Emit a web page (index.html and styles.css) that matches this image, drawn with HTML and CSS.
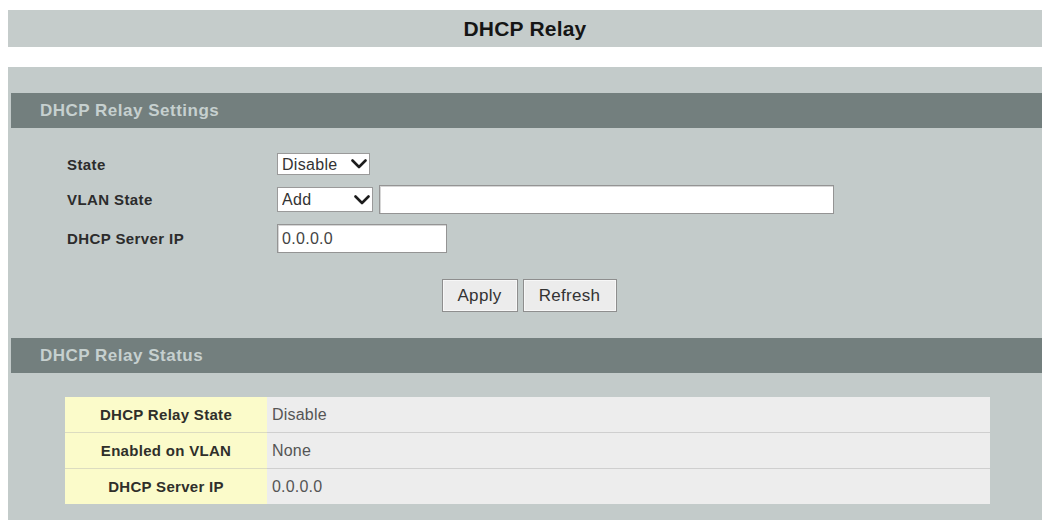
FILE: index.html
```html
<!DOCTYPE html>
<html lang="en">
<head>
<meta charset="utf-8">
<title>DHCP Relay</title>
<link rel="stylesheet" href="styles.css">
</head>
<body>
<div class="page">
  <div class="page-title">DHCP Relay</div>

  <div class="panel">
    <div class="section-head">DHCP Relay Settings</div>

    <form class="settings" onsubmit="return false">
      <div class="form-grid">
        <label class="field-label" for="relay-state">State</label>
        <div class="field">
          <span class="select select-state">
            <select id="relay-state">
              <option>Disable</option>
              <option>Enable</option>
            </select>
            <svg class="chev" viewBox="0 0 16 10" aria-hidden="true"><polyline points="1.5,1.5 8,8 14.5,1.5"/></svg>
          </span>
        </div>

        <label class="field-label" for="vlan-state">VLAN State</label>
        <div class="field">
          <span class="select select-vlan">
            <select id="vlan-state">
              <option>Add</option>
              <option>Delete</option>
            </select>
            <svg class="chev" viewBox="0 0 16 10" aria-hidden="true"><polyline points="1.5,1.5 8,8 14.5,1.5"/></svg>
          </span>
          <input class="text-input vlan-list" type="text" value="">
        </div>

        <label class="field-label" for="server-ip">DHCP Server IP</label>
        <div class="field">
          <input id="server-ip" class="text-input ip-input" type="text" value="0.0.0.0">
        </div>
      </div>

      <div class="actions">
        <button type="button" class="btn btn-apply">Apply</button>
        <button type="button" class="btn btn-refresh">Refresh</button>
      </div>
    </form>

    <div class="section-head">DHCP Relay Status</div>

    <table class="status">
      <tr>
        <th>DHCP Relay State</th>
        <td>Disable</td>
      </tr>
      <tr>
        <th>Enabled on VLAN</th>
        <td>None</td>
      </tr>
      <tr>
        <th>DHCP Server IP</th>
        <td>0.0.0.0</td>
      </tr>
    </table>
  </div>
</div>
</body>
</html>
```

FILE: styles.css
```css
html, body {
  margin: 0;
  padding: 0;
  background: #ffffff;
  font-family: "Liberation Sans", Arial, sans-serif;
  color: #2e2e2e;
}

.page {
  padding: 10px 4px 0 8px;
}

/* page title strip */
.page-title {
  height: 37px;
  line-height: 37px;
  background: #c5cccb;
  text-align: center;
  font-size: 21px;
  font-weight: bold;
  color: #151515;
  letter-spacing: 0.2px;
}

/* main grey panel */
.panel {
  margin-top: 20px;
  background: #c3cbca;
  padding-top: 26px;
  padding-bottom: 40px;
}

.section-head {
  height: 35px;
  line-height: 35px;
  margin-left: 3px;
  padding-left: 29px;
  background: #737f7e;
  color: #c6d0cf;
  font-size: 17px;
  font-weight: bold;
  letter-spacing: 0.5px;
}

/* settings form */
.settings {
  margin: 0;
  padding: 25px 0 26px 0;
}

.form-grid {
  display: grid;
  grid-template-columns: 210px auto;
  row-gap: 10px;
  align-items: center;
  padding-left: 59px;
}

.field-label {
  font-size: 15px;
  font-weight: bold;
  color: #2c2c2c;
  letter-spacing: 0.4px;
}

.field {
  display: flex;
  align-items: center;
  gap: 6px;
}

.select {
  position: relative;
  display: inline-block;
}

.select select {
  appearance: none;
  -webkit-appearance: none;
  display: block;
  margin: 0;
  padding: 0 0 0 4px;
  border: 1px solid #9a9a9a;
  border-radius: 0;
  background: #ffffff;
  font-family: "Liberation Sans", Arial, sans-serif;
  font-size: 16px;
  color: #333333;
  letter-spacing: 0.3px;
  outline: none;
}

.select-state select {
  width: 93px;
  height: 22px;
}

.select-vlan select {
  width: 96px;
  height: 25px;
}

.chev {
  position: absolute;
  top: 50%;
  width: 16px;
  height: 10px;
  margin-top: -5px;
  pointer-events: none;
}

.select-state .chev { right: 3px; }
.select-vlan .chev { right: 3px; }

.chev polyline {
  fill: none;
  stroke: #1c1c1c;
  stroke-width: 2.6;
  stroke-linecap: round;
  stroke-linejoin: round;
}

.text-input {
  box-sizing: border-box;
  height: 29px;
  margin: 0;
  padding: 0 4px;
  border: 1px solid #949494;
  border-radius: 0;
  background: #ffffff;
  box-shadow: inset 1px 1px 0 #d6d6d6;
  font-family: "Liberation Sans", Arial, sans-serif;
  font-size: 16px;
  color: #444444;
  letter-spacing: 0.3px;
  outline: none;
}

.vlan-list { width: 455px; }
.ip-input { width: 170px; }

/* button row */
.actions {
  display: flex;
  justify-content: center;
  gap: 5px;
  margin-top: 26px;
  padding-left: 8px;
}

.btn {
  box-sizing: border-box;
  height: 33px;
  margin: 0;
  padding: 0;
  border: 1px solid #8e8e8e;
  border-radius: 0;
  background: #ececec;
  box-shadow: inset 0 0 0 1px #f7f7f7;
  font-family: "Liberation Sans", Arial, sans-serif;
  font-size: 17px;
  color: #333333;
  letter-spacing: 0.3px;
}

.btn-apply { width: 76px; }
.btn-refresh { width: 94px; }

/* status table */
.status {
  margin: 24px 0 0 57px;
  width: 925px;
  border-collapse: collapse;
}

.status tr + tr th,
.status tr + tr td {
  border-top: 1px solid #cfcfcf;
}

.status tr + tr th {
  border-top-color: #dcdcc0;
}

.status th,
.status td {
  height: 35px;
  padding: 0;
}

.status th {
  width: 202px;
  background: #fbfbca;
  text-align: center;
  font-size: 15px;
  font-weight: bold;
  color: #2f2f2a;
  letter-spacing: 0.3px;
}

.status td {
  background: #ededed;
  padding-left: 5px;
  font-size: 16px;
  color: #555555;
  letter-spacing: 0.2px;
}
```
